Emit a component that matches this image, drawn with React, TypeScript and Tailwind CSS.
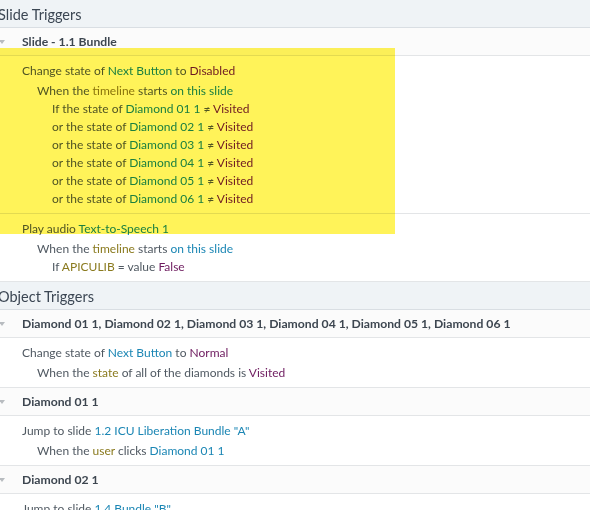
import React from "react";

// trigger list text colours
const GRAY = "text-[#505962]";
const BLUE = "text-[#1b86b4]";
const PURPLE = "text-[#6d1a5e]";
const OLIVE = "text-[#8a7a1e]";

type Part = [string, string?];

function Line({ parts, indent, first }: { parts: Part[]; indent: number; first?: boolean }) {
  const pad = indent === 0 ? "pl-[22px]" : indent === 1 ? "pl-[37px]" : "pl-[52px]";
  return (
    <div className={`${pad} h-[18px] leading-[18px] whitespace-nowrap ${first ? "mb-[2px]" : ""}`}>
      {parts.map(([t, c], i) => (
        <span key={i} className={c ?? GRAY}>
          {t}
        </span>
      ))}
    </div>
  );
}

function Block({ action, lines }: { action: Part[]; lines: { indent: number; parts: Part[] }[] }) {
  return (
    <div className="pt-[6px] pb-[5px] border-b border-[#e3e5e7] bg-white">
      <Line parts={action} indent={0} first />
      {lines.map((l, i) => (
        <Line key={i} parts={l.parts} indent={l.indent} />
      ))}
    </div>
  );
}

function SectionHeader({ title }: { title: string }) {
  return (
    <div className="h-[28px] bg-[#eff3f6] border-b border-[#d9dee3] flex items-center pt-[2px]">
      <span className="-ml-[2px] text-[14.5px] text-[#3b4653]">{title}</span>
    </div>
  );
}

function GroupRow({ title }: { title: string }) {
  return (
    <div className="relative h-[28px] bg-[#fbfbfb] border-b border-[#e3e5e7] flex items-center pt-[2px]">
      <svg className="absolute left-[-1px] top-[12px]" width="6" height="5" viewBox="0 0 6 5">
        <path d="M0 0 L6 0 L3 4 Z" fill="#b8bcc0" />
      </svg>
      <span className="pl-[22px] text-[12.2px] font-bold text-[#3d4650]">{title}</span>
    </div>
  );
}

const cond = (n: string, first: boolean): { indent: number; parts: Part[] } => ({
  indent: 2,
  parts: [
    [first ? "If the state of " : "or the state of "],
    [`Diamond ${n} 1`, BLUE],
    [" ≠ "],
    ["Visited", PURPLE],
  ],
});

export default function App() {
  return (
    <div
      className="relative w-[590px] h-[510px] overflow-hidden bg-white text-[12px]"
      style={{ fontFamily: 'Lato, "Noto Sans", sans-serif' }}
    >
      <SectionHeader title="Slide Triggers" />
      <GroupRow title="Slide - 1.1 Bundle" />
      <Block
        action={[["Change state of "], ["Next Button", BLUE], [" to "], ["Disabled", PURPLE]]}
        lines={[
          { indent: 1, parts: [["When the "], ["timeline", OLIVE], [" starts "], ["on this slide", BLUE]] },
          cond("01", true),
          cond("02", false),
          cond("03", false),
          cond("04", false),
          cond("05", false),
          cond("06", false),
        ]}
      />
      <Block
        action={[["Play audio "], ["Text-to-Speech 1", BLUE]]}
        lines={[
          { indent: 1, parts: [["When the "], ["timeline", OLIVE], [" starts "], ["on this slide", BLUE]] },
          { indent: 2, parts: [["If "], ["APICULIB", OLIVE], [" = value "], ["False", PURPLE]] },
        ]}
      />
      <SectionHeader title="Object Triggers" />
      <GroupRow title="Diamond 01 1, Diamond 02 1, Diamond 03 1, Diamond 04 1, Diamond 05 1, Diamond 06 1" />
      <Block
        action={[["Change state of "], ["Next Button", BLUE], [" to "], ["Normal", PURPLE]]}
        lines={[
          { indent: 1, parts: [["When the "], ["state", OLIVE], [" of all of the diamonds is "], ["Visited", PURPLE]] },
        ]}
      />
      <GroupRow title="Diamond 01 1" />
      <Block
        action={[["Jump to slide "], ['1.2 ICU Liberation Bundle "A"', BLUE]]}
        lines={[{ indent: 1, parts: [["When the "], ["user", OLIVE], [" clicks "], ["Diamond 01 1", BLUE]] }]}
      />
      <GroupRow title="Diamond 02 1" />
      <Block
        action={[["Jump to slide "], ['1.4 Bundle "B"', BLUE]]}
        lines={[{ indent: 1, parts: [["When the "], ["user", OLIVE], [" clicks "], ["Diamond 02 1", BLUE]] }]}
      />

      {/* highlighter mark over the first slide trigger */}
      <div className="absolute left-0 top-[48px] w-[395px] h-[186px] bg-[#fff359] mix-blend-multiply pointer-events-none" />
    </div>
  );
}
